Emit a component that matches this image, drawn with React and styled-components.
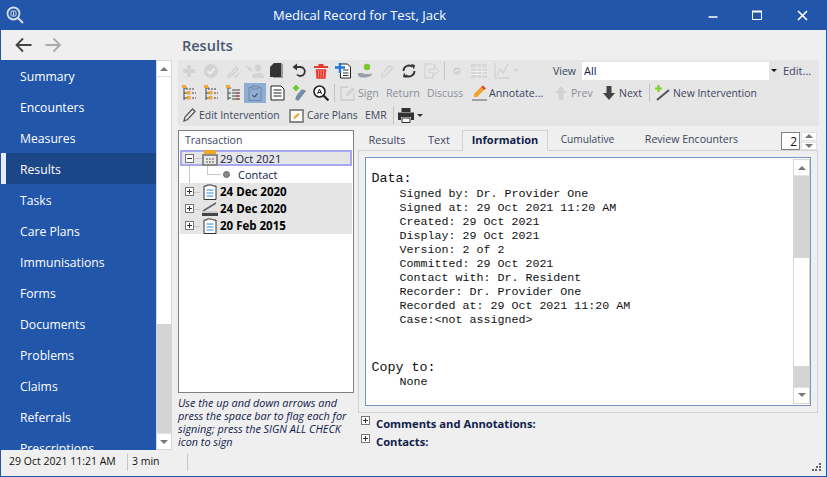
import React from 'react';
import styled, { createGlobalStyle } from 'styled-components';

const GlobalStyle = createGlobalStyle`
  html, body { margin: 0; padding: 0; background: #efefef; }
  body { font-family: 'Open Sans', 'Liberation Sans', sans-serif; font-size: 12px; color: #1e2a4a; }
`;

const BLUE = '#2156ab';

const Window = styled.div`
  width: 827px;
  height: 477px;
  box-sizing: border-box;
  border: 1px solid ${BLUE};
  border-top: 0;
  display: flex;
  flex-direction: column;
  overflow: hidden;
  background: #efefef;
`;

const TitleBar = styled.div`
  height: 30px;
  flex: none;
  background: ${BLUE};
  color: #fff;
  display: grid;
  grid-template-columns: 40px 1fr 137px;
  align-items: center;
  margin: 0 -1px;
`;

const AppLogo = styled.div`
  padding-left: 6px;
  display: flex;
`;

const TitleText = styled.div`
  text-align: center;
  font-size: 13px;
  padding-right: 11px;
`;

const WindowButtons = styled.div`
  display: flex;
  justify-content: flex-end;
  padding-right: 2px;
`;

const WindowButton = styled.div`
  width: 45px;
  height: 30px;
  display: flex;
  align-items: center;
  justify-content: center;
`;

const NavRow = styled.div`
  height: 30px;
  flex: none;
  display: flex;
  align-items: center;
  background: #efefef;
`;

const NavArrows = styled.div`
  width: 181px;
  padding-left: 14px;
  box-sizing: border-box;
  display: flex;
  gap: 13px;
  flex: none;
`;

const PageTitle = styled.div`
  font-size: 14.5px;
  font-weight: 600;
  color: #4a5670;
`;

const Body = styled.div`
  flex: 1;
  min-height: 0;
  display: flex;
`;

const Sidebar = styled.nav`
  width: 155px;
  flex: none;
  background: ${BLUE};
  overflow: hidden;
`;

const NavItem = styled.div`
  height: 31px;
  line-height: 34px;
  box-sizing: border-box;
  padding-left: ${p => (p.$active ? '14px' : '19px')};
  color: #fff;
  font-size: 12.2px;
  background: ${p => (p.$active ? '#1b4688' : 'transparent')};
  border-left: ${p => (p.$active ? '5px solid #e8edf5' : '0')};
`;

const VScroll = styled.div`
  width: ${p => p.$w || 16}px;
  flex: none;
  display: flex;
  flex-direction: column;
  box-sizing: border-box;
  border: 1px solid #d6d6d6;
  background: #fff;
`;

const ScrollBtn = styled.div`
  height: ${p => p.$h || 16}px;
  flex: none;
  background: #fff;
  display: flex;
  align-items: center;
  justify-content: center;
  border-${p => (p.$down ? 'top' : 'bottom')}: 1px solid #e2e2e2;
  box-sizing: border-box;
  &::after {
    content: '';
    border-left: 4px solid transparent;
    border-right: 4px solid transparent;
    ${p => (p.$down ? 'border-top' : 'border-bottom')}: 4px solid #777;
  }
`;

const ScrollSpace = styled.div`
  flex: ${p => p.$grow};
  background: ${p => (p.$thumb ? '#d4d4d4' : '#fff')};
`;

const Main = styled.div`
  flex: 1;
  min-width: 0;
  padding-left: 6px;
  padding-right: 7px;
  display: flex;
  flex-direction: column;
`;

const Toolbar = styled.div`
  height: 66px;
  flex: none;
  background: #e6e6e6;
  display: flex;
  flex-direction: column;
`;

const ToolRow = styled.div`
  height: ${p => p.$h}px;
  flex: none;
  display: flex;
  align-items: center;
`;

const Tool = styled.div`
  width: ${p => p.$w || 22}px;
  height: 20px;
  flex: none;
  display: flex;
  align-items: center;
  justify-content: center;
  background: ${p => (p.$on ? '#8fadd3' : 'transparent')};
`;

const ToolText = styled.div`
  height: 20px;
  flex: none;
  width: ${p => p.$w}px;
  display: flex;
  align-items: center;
  gap: ${p => p.$gap || 0}px;
  padding-left: ${p => p.$pl || 0}px;
  box-sizing: border-box;
  white-space: nowrap;
  font-size: ${p => p.$fs || 11}px;
  color: ${p => (p.$off ? '#8b8f9b' : '#3c4560')};
`;

const ToolSep = styled.div`
  width: 1px;
  height: 18px;
  flex: none;
  background: #c2c2c2;
  margin: 0 ${p => p.$r || 0}px 0 ${p => p.$l || 0}px;
`;

const ViewLabel = styled.div`
  width: 29px;
  margin-left: ${p => p.$ml}px;
  flex: none;
  font-size: 10.5px;
  color: #3c4560;
`;

const ViewSelect = styled.div`
  width: 197px;
  height: 18px;
  flex: none;
  background: #fff;
  display: flex;
  align-items: center;
  justify-content: space-between;
  padding-left: 2px;
  box-sizing: border-box;
  font-size: 11px;
  color: #10204a;
`;

const SelectArrow = styled.div`
  width: 10px;
  height: 18px;
  background: #e4e4e4;
  display: flex;
  align-items: center;
  justify-content: center;
  &::after {
    content: '';
    border-left: 3px solid transparent;
    border-right: 3px solid transparent;
    border-top: 3px solid #111;
  }
`;

const Content = styled.div`
  flex: 1;
  min-height: 0;
  display: flex;
  padding-top: 4px;
  gap: 4px;
`;

const LeftCol = styled.div`
  width: 176px;
  flex: none;
  display: flex;
  flex-direction: column;
`;

const TreeBox = styled.div`
  height: 263px;
  flex: none;
  box-sizing: border-box;
  border: 1px solid #808080;
  background: #fff;
  position: relative;
`;

const TreeHead = styled.div`
  height: 19px;
  line-height: 19px;
  padding-left: 6px;
  font-size: 10.5px;
  color: #3c4560;
`;

const TreeLine = styled.div`
  position: absolute;
  left: 10px;
  top: 34px;
  width: 1px;
  height: 60px;
  background: #c8c8c8;
`;

const TreeRow = styled.div`
  height: ${p => p.$h || 17}px;
  display: flex;
  align-items: center;
  margin: 0 1px;
  box-sizing: border-box;
  position: relative;
  background: ${p => (p.$shade || p.$sel ? '#e5e5e5' : 'transparent')};
  border: ${p => (p.$sel ? '2px solid #a8a8f0' : '0')};
  padding-left: ${p => (p.$sel ? '3px' : '5px')};
  font-size: ${p => (p.$bold ? 11.5 : 11)}px;
  font-weight: ${p => (p.$bold ? 700 : 400)};
  color: ${p => (p.$bold ? '#000' : '#10204a')};
  &::before {
    content: '';
    position: absolute;
    left: 13px;
    top: 50%;
    width: 7px;
    height: 1px;
    background: #c8c8c8;
  }
`;

const Expander = styled.div`
  width: 9px;
  height: 9px;
  flex: none;
  box-sizing: border-box;
  border: 1px solid #777;
  background: #fff;
  position: relative;
  z-index: 1;
  margin-right: 7px;
  &::before {
    content: '';
    position: absolute;
    left: 1px;
    right: 1px;
    top: 3px;
    height: 1px;
    background: #333;
  }
  ${p => p.$plus && `&::after {
    content: '';
    position: absolute;
    top: 1px;
    bottom: 1px;
    left: 3px;
    width: 1px;
    background: #333;
  }`}
`;

const TreeIcon = styled.div`
  width: 17px;
  flex: none;
  margin-right: 2px;
  display: flex;
  justify-content: center;
`;

const ChildRow = styled(TreeRow)`
  padding-left: 43px;
  gap: 8px;
  &::before {
    left: 27px;
    top: 0;
    width: 13px;
    height: 8px;
    background: transparent;
    border-left: 1px solid #c8c8c8;
    border-bottom: 1px solid #c8c8c8;
  }
`;

const Dot = styled.span`
  width: 7px;
  height: 7px;
  border-radius: 50%;
  background: #8a8a8a;
  border: 1px solid #666;
  box-sizing: border-box;
`;

const Hint = styled.div`
  font-size: 10.85px;
  font-style: italic;
  line-height: 13px;
  color: #10204a;
  padding-top: 3px;
`;

const RightCol = styled.div`
  flex: 1;
  min-width: 0;
  display: flex;
  flex-direction: column;
`;

const TabStrip = styled.div`
  height: 20px;
  flex: none;
  display: flex;
  position: relative;
  z-index: 1;
`;

const Tab = styled.div`
  height: ${p => (p.$active ? '21px' : '20px')};
  width: ${p => p.$w}px;
  flex: none;
  box-sizing: border-box;
  display: flex;
  align-items: center;
  justify-content: center;
  padding-bottom: ${p => (p.$active ? 3 : 2)}px;
  font-size: ${p => p.$fs || 11}px;
  background: ${p => (p.$active ? '#efefef' : 'transparent')};
  border: ${p => (p.$active ? '1px solid #d2d2d2' : '0')};
  border-bottom: 0;
  font-weight: ${p => (p.$active ? 700 : 400)};
  color: ${p => (p.$active ? '#10204a' : '#3c4560')};
`;

const Spinner = styled.div`
  margin-left: auto;
  margin-right: 2px;
  margin-top: 2px;
  display: flex;
  gap: 1px;
  height: 18px;
`;

const SpinnerValue = styled.div`
  width: 19px;
  box-sizing: border-box;
  border: 1px solid #808080;
  background: #fff;
  font-size: 12px;
  color: #111;
  text-align: right;
  line-height: 17px;
  padding-right: 2px;
`;

const SpinnerBtns = styled.div`
  width: 16px;
  display: flex;
  flex-direction: column;
  gap: 1px;
`;

const SpinnerBtn = styled(ScrollBtn)`
  border: 1px solid #e2e2e2;
`;

const TabPanel = styled.div`
  height: 263px;
  flex: none;
  width: 460px;
  box-sizing: border-box;
  border: 1px solid #d2d2d2;
  padding: 6px;
`;

const TextFrame = styled.div`
  height: 100%;
  box-sizing: border-box;
  border: 1px solid #7793c4;
  background: #fff;
  display: flex;
  padding: 1px 0 1px 1px;
`;

const Record = styled.pre`
  flex: 1;
  margin: 0;
  padding: 12px 0 0 4.5px;
  overflow: hidden;
  font-family: 'Liberation Mono', 'Courier New', monospace;
  font-size: 11.67px;
  line-height: 14px;
  color: #111;
`;

const RecordHead = styled.div`
  font-size: 13.33px;
  line-height: 15px;
  margin-bottom: ${p => p.$mb || 0}px;
  margin-top: ${p => p.$mt || 0}px;
`;

const Sections = styled.div`
  padding: 1px 0 0 3px;
`;

const Section = styled.div`
  height: 18px;
  display: flex;
  align-items: center;
  box-sizing: border-box;
  font-size: 11.2px;
  font-weight: 700;
  color: #10204a;
`;

const SectionToggle = styled(Expander)`
  align-self: flex-start;
  margin-top: 2px;
  margin-right: 6px;
`;

const StatusBar = styled.div`
  height: 26px;
  flex: none;
  display: flex;
  align-items: flex-start;
  padding-top: 4px;
  box-sizing: border-box;
  position: relative;
  background: #efefef;
  font-size: 10.5px;
  color: #111;
`;

const StatusCell = styled.div`
  width: ${p => p.$w}px;
  height: 17px;
  line-height: 15px;
  box-sizing: border-box;
  padding-left: ${p => p.$pl}px;
  border-right: 1px solid #c6c6c6;
  flex: none;
`;

const Grip = styled.svg`
  position: absolute;
  right: 5px;
  bottom: 5px;
`;

const Svg = ({ w = 16, h = 16, children }) => (
  <svg width={w} height={h} viewBox={`0 0 ${w} ${h}`} fill="none">{children}</svg>
);

const Logo = () => (
  <Svg w={18} h={18}>
    <circle cx="7.5" cy="7.5" r="6" stroke="#d8dde6" strokeWidth="1.8" />
    <rect x="5" y="5" width="5" height="5" rx="1" stroke="#d8dde6" />
    <path d="M7.5 5.5v4" stroke="#d8dde6" />
    <path d="M12 12l5 5" stroke="#d8dde6" strokeWidth="2" />
  </Svg>
);

const ArrowLeft = ({ color }) => (
  <Svg w={17} h={16}><path d="M16.5 8H1.500M8 1.500L1.500 8 8 14.500" stroke={color} strokeWidth="1.8" /></Svg>
);
const ArrowRight = ({ color }) => (
  <Svg w={17} h={16}><path d="M0.5 8H15M8.5 1.5L15 8l-6.5 6.5" stroke={color} strokeWidth="1.8" /></Svg>
);

const OFF = '#d3d3d3';

const IconPlus = () => <Svg><path d="M8 2v12M2 8h12" stroke={OFF} strokeWidth="4" /></Svg>;
const IconCheck = () => (
  <Svg><circle cx="8" cy="8" r="7" fill={OFF} /><path d="M4.5 8l2.5 2.5 4.5-5" stroke="#eee" strokeWidth="2" /></Svg>
);
const IconSignOff = () => (
  <Svg><path d="M3 13L11 4l2 2-8 8H3z" stroke={OFF} strokeWidth="1.5" /><path d="M9 13l2 1 3-4" stroke={OFF} strokeWidth="1.6" /></Svg>
);
const IconPerson = () => (
  <Svg w={18} h={16}>
    <circle cx="12" cy="5" r="3.4" fill={OFF} /><path d="M6 15c0-4 2-5 6-5s6 1 6 5z" fill={OFF} />
    <path d="M1 3l3 4h3M4 4v3" stroke={OFF} strokeWidth="1.4" />
  </Svg>
);
const IconDocs = () => (
  <Svg w={14} h={16}>
    <path d="M4 0h8v1h1v14H3V3z" fill="#9a9a9a" />
    <path d="M4 0h7v14H0V4z" fill="#333" />
  </Svg>
);
const IconUndo = () => (
  <Svg><path d="M5 4h4.500a4.500 4.500 0 1 1-3.500 7.500" stroke="#333" strokeWidth="1.8" /><path d="M6 .5L1.500 4 6 7.500z" fill="#333" /></Svg>
);
const IconTrash = () => (
  <Svg w={14} h={16}>
    <path d="M0 3h14v2H0zM4.500 1h5v2h-5z" fill="#e8382d" />
    <path d="M1.500 6h11l-.7 10H2.200zM4.500 7v7.500M7 7v7.500M9.500 7v7.500" fill="#e8382d" stroke="#fff" strokeWidth=".4" />
  </Svg>
);
const IconDocBlue = () => (
  <Svg w={17} h={16}>
    <path d="M5.500 1h7l3 3v11h-10z" fill="#fff" stroke="#222" />
    <path d="M8 7h5.500M8 10h5.500M8 12.500h5.500" stroke="#333" />
    <path d="M5 0v10M0 4.500h10" stroke="#1a78d8" strokeWidth="2.400" />
  </Svg>
);
const IconHand = () => (
  <Svg w={17} h={16}>
    <circle cx="10" cy="4" r="3.200" fill="#7cc92c" />
    <path d="M1 10h4l3 1h5l2-1-1 3-5 1.500H4L1 13z" fill="#9aa0a8" />
  </Svg>
);
const IconPencilOff = () => (
  <Svg><path d="M3 13.500v-3L11 2.500 13.500 5l-8 8.500z" stroke={OFF} strokeWidth="1.500" /></Svg>
);
const IconSync = () => (
  <Svg>
    <path d="M2.500 8a5.500 5.500 0 0 1 9-4.200M13.500 8a5.500 5.500 0 0 1-9 4.200" stroke="#333" strokeWidth="1.800" />
    <path d="M10 1l4 1-1 4.500zM6 15l-4-1 1-4.500z" fill="#333" />
  </Svg>
);
const IconExit = () => (
  <Svg w={17} h={16}>
    <path d="M9 1H2v14h8v-4M10 1l2 2v2" stroke={OFF} strokeWidth="1.400" />
    <path d="M6 6.500h5V4l5 4-5 4V9.500H6z" fill="#e6e6e6" stroke={OFF} />
  </Svg>
);
const IconSmallDot = () => (
  <Svg w={10} h={10}><circle cx="5" cy="5" r="3.800" fill={OFF} /><path d="M3 6l2-2 2 1" stroke="#eee" /></Svg>
);
const IconTable = () => (
  <Svg w={16} h={14}>
    <path d="M0 0h16v14H0z" fill="#d6d6d6" />
    <path d="M0 4h16M0 7.500h16M0 10.500h16M6 1v13M11 1v13" stroke="#efefef" />
  </Svg>
);
const IconChart = () => (
  <Svg>
    <path d="M1 0v15h15" stroke={OFF} strokeWidth="1.400" />
    <path d="M3 12l3-6 3 4 5-9" stroke={OFF} strokeWidth="1.400" />
  </Svg>
);
const Caret = ({ color = OFF, ml = 3 }) => (
  <svg width="6" height="3" viewBox="0 0 6 3" style={{ marginLeft: ml }}><path d="M0 0h6L3 3z" fill={color} /></svg>
);
const IconFlagTree = ({ variant }) => (
  <Svg w={16} h={16}>
    <path d="M3 3v12" stroke="#444" />
    <path d="M3 8h3M3 13h3M3 3h3" stroke="#444" />
    <rect x="1" y="0" width="4" height="3" fill="#f0a830" />
    {variant !== 3 && <rect x="6" y="6" width="3.500" height="3.500" fill="#f0a830" />}
    {variant !== 3 && <rect x="6" y="11" width="3.500" height="3.500" fill="#f0a830" />}
    {variant === 3 && <path d="M7 5h8M7 8h8M7 11h8M7 14h8" stroke="#444" />}
    {variant === 3 && <path d="M11 8h3M11 11h3M11 14h3" stroke="#b33" />}
    {variant !== 3 && <path d="M5 4h9M11 8h4M11 13h4" stroke="#444" strokeDasharray="2 1" />}
  </Svg>
);
const IconClipboard = () => (
  <Svg w={14} h={16}>
    <path d="M1 2.500h12v13H1z" stroke="#7387a6" />
    <path d="M4 1h6v3H4z" fill="#8fadd3" stroke="#7387a6" />
    <path d="M4.500 10l2 2 3-3.500" stroke="#223" />
  </Svg>
);
const IconNote = () => (
  <Svg w={15} h={16}>
    <path d="M1 1h10l3 3v11H1z" fill="#fff" stroke="#222" />
    <path d="M3.500 5h8M3.500 8h8M3.500 11h8" stroke="#222" />
  </Svg>
);
const IconVial = () => (
  <Svg w={17} h={17}>
    <path d="M2 3h6M5 0v6" stroke="#6cc72a" strokeWidth="2.400" />
    <path d="M14 6l-7 9-2-1 1-3 5-6z" fill="#5b96cf" stroke="#7f8791" strokeWidth="1.400" />
  </Svg>
);
const IconSearchA = () => (
  <Svg w={16} h={16}>
    <circle cx="6.500" cy="6.500" r="5.500" fill="#fff" stroke="#222" strokeWidth="1.600" />
    <path d="M4.500 9l2-5 2 5M5 7.500h3" stroke="#222" />
    <path d="M10.500 10.500l5 5" stroke="#222" strokeWidth="2.200" />
  </Svg>
);
const IconSignDoc = () => (
  <Svg w={17} h={16}>
    <path d="M14 8v7H1V2h7" stroke={OFF} strokeWidth="1.800" />
    <path d="M6 11V8.500L12.500 2 15 4.500 8.500 11z" fill={OFF} />
  </Svg>
);
const IconAnnotate = () => (
  <Svg w={15} h={16}>
    <path d="M2 12V9l7-7 3 3-7 7z" fill="#f2a324" />
    <path d="M9 2l2-1.500 3 3L12 5z" fill="#e8402f" />
    <path d="M0 15h15" stroke="#8a8a8a" strokeWidth="1.500" />
  </Svg>
);
const IconUp = ({ color }) => <Svg w={12} h={14}><path d="M6 0l6 7H8.500v7h-5V7H0z" fill={color} /></Svg>;
const IconDown = ({ color }) => <Svg w={12} h={14}><path d="M6 14L0 7h3.500V0h5v7H12z" fill={color} /></Svg>;
const IconNewInt = () => (
  <Svg>
    <path d="M0 3.500h7M3.500 0v7" stroke="#7ed321" strokeWidth="2.200" />
    <path d="M2 15L14 5" stroke="#555" strokeWidth="2" />
  </Svg>
);
const IconPencil = () => (
  <Svg w={13} h={14}>
    <path d="M1 13l1-4 7.500-8L12 3.500 4.500 11.500z" fill="#eee" stroke="#555" strokeWidth="1.300" />
  </Svg>
);
const IconCarePlan = () => (
  <Svg w={15} h={15}>
    <path d="M1 2h13v12H1z" fill="#fafafa" stroke="#666" strokeWidth="1.400" />
    <path d="M4 11l1-2 4-4 1.500 1.500-4 4z" fill="#f2a324" />
  </Svg>
);
const IconPrinter = () => (
  <Svg w={16} h={15}>
    <path d="M3.500 0h9v4h-9z" fill="#333" />
    <path d="M0 4.500h16V12h-3V9H3v3H0z" fill="#333" />
    <path d="M4 10h8v4.500H4z" fill="#fff" stroke="#333" />
  </Svg>
);

const IconCalendar = () => (
  <Svg w={16} h={16}>
    <rect x="2" y="0" width="12" height="4" fill="#f5a623" />
    <rect x="1" y="5" width="14" height="10" fill="#e8e8e8" stroke="#8a8a8a" strokeWidth="2" />
    <path d="M4 9h2M7 9h2M10 9h2M4 12h2M7 12h2M10 12h2" stroke="#888" strokeWidth="1.500" />
  </Svg>
);
const IconTreeDoc = () => (
  <Svg w={14} h={16}>
    <path d="M1 2h3V1h5l1 1h3v13.500H1z" fill="#fff" stroke="#333" />
    <path d="M3.500 6h7M3.500 9h7M3.500 12h7" stroke="#2a8ae0" />
  </Svg>
);
const IconScanner = () => (
  <Svg w={16} h={16}>
    <path d="M1 10l13-8" stroke="#666" strokeWidth="1.500" />
    <path d="M0 10h16v2H0z" fill="#ccc" />
    <path d="M0 12h16v3H0z" fill="#444" />
  </Svg>
);

const navItems = ['Summary', 'Encounters', 'Measures', 'Results', 'Tasks', 'Care Plans', 'Immunisations', 'Forms', 'Documents', 'Problems', 'Claims', 'Referrals', 'Prescriptions'];

const recordLines = `    Signed by: Dr. Provider One
    Signed at: 29 Oct 2021 11:20 AM
    Created: 29 Oct 2021
    Display: 29 Oct 2021
    Version: 2 of 2
    Committed: 29 Oct 2021
    Contact with: Dr. Resident
    Recorder: Dr. Provider One
    Recorded at: 29 Oct 2021 11:20 AM
    Case:<not assigned>`;

const App = () => (
  <>
    <GlobalStyle />
    <Window>
      <TitleBar>
        <AppLogo><Logo /></AppLogo>
        <TitleText>Medical Record for Test, Jack</TitleText>
        <WindowButtons>
          <WindowButton><Svg w={10} h={10}><path d="M.5 7h9" stroke="#fff" strokeWidth="1.500" /></Svg></WindowButton>
          <WindowButton><Svg w={11} h={11}><path d="M.5 1.500h9v8h-9z" stroke="#fff" /><path d="M0 1.500h10" stroke="#fff" strokeWidth="2" /></Svg></WindowButton>
          <WindowButton><Svg w={11} h={11}><path d="M1 1l9 9M10 1l-9 9" stroke="#fff" strokeWidth="1.700" /></Svg></WindowButton>
        </WindowButtons>
      </TitleBar>
      <NavRow>
        <NavArrows>
          <ArrowLeft color="#444" />
          <ArrowRight color="#aaa" />
        </NavArrows>
        <PageTitle>Results</PageTitle>
      </NavRow>
      <Body>
        <Sidebar>
          {navItems.map(n => <NavItem key={n} $active={n === 'Results'}>{n}</NavItem>)}
        </Sidebar>
        <VScroll>
          <ScrollBtn />
          <ScrollSpace $grow={248} />
          <ScrollSpace $grow={109} $thumb />
          <ScrollBtn $down />
        </VScroll>
        <Main>
          <Toolbar>
            <ToolRow $h={21}>
              <Tool><IconPlus /></Tool>
              <Tool><IconCheck /></Tool>
              <Tool><IconSignOff /></Tool>
              <Tool><IconPerson /></Tool>
              <Tool><IconDocs /></Tool>
              <Tool><IconUndo /></Tool>
              <Tool><IconTrash /></Tool>
              <Tool><IconDocBlue /></Tool>
              <Tool><IconHand /></Tool>
              <Tool><IconPencilOff /></Tool>
              <Tool><IconSync /></Tool>
              <Tool><IconExit /></Tool>
              <ToolSep $l={2} $r={1} />
              <Tool><IconSmallDot /></Tool>
              <Tool><IconTable /></Tool>
              <Tool $w={32}><IconChart /><Caret /></Tool>
              <ViewLabel $ml={31}>View</ViewLabel>
              <ViewSelect>All<SelectArrow /></ViewSelect>
              <ToolText $w={36} $pl={4}>Edit...</ToolText>
            </ToolRow>
            <ToolRow $h={24}>
              <Tool><IconFlagTree /></Tool>
              <Tool><IconFlagTree /></Tool>
              <Tool><IconFlagTree variant={3} /></Tool>
              <Tool $on><IconClipboard /></Tool>
              <Tool><IconNote /></Tool>
              <Tool><IconVial /></Tool>
              <Tool><IconSearchA /></Tool>
              <ToolSep $l={2} $r={5} />
              <ToolText $w={46} $gap={1} $fs={10.7} $off><IconSignDoc /><span>Sign</span></ToolText>
              <ToolText $w={41} $fs={10.7} $off>Return</ToolText>
              <ToolText $w={45} $fs={10.3} $off>Discuss</ToolText>
              <ToolText $w={83} $gap={2} $fs={10.7}><IconAnnotate /><span>Annotate...</span></ToolText>
              <ToolText $w={48} $gap={4} $fs={10.5} $off><IconUp color={OFF} /><span>Prev</span></ToolText>
              <ToolText $w={46} $gap={4} $fs={10.5}><IconDown color="#444" /><span>Next</span></ToolText>
              <ToolSep $r={5} />
              <ToolText $w={114} $gap={2} $fs={10.4}><IconNewInt /><span>New Intervention</span></ToolText>
            </ToolRow>
            <ToolRow $h={20}>
              <ToolText $w={111} $pl={5} $gap={3} $fs={10.4}><IconPencil /><span>Edit Intervention</span></ToolText>
              <ToolText $w={76} $gap={3} $fs={10.3}><IconCarePlan /><span>Care Plans</span></ToolText>
              <ToolText $w={28} $fs={10.5}>EMR</ToolText>
              <ToolSep $r={4} />
              <Tool $w={25}><IconPrinter /><Caret color="#333" /></Tool>
            </ToolRow>
          </Toolbar>
          <Content>
            <LeftCol>
              <TreeBox>
                <TreeLine />
                <TreeHead>Transaction</TreeHead>
                <TreeRow $sel $h={16}><Expander /><TreeIcon><IconCalendar /></TreeIcon>29 Oct 2021</TreeRow>
                <ChildRow $h={17}><Dot />Contact</ChildRow>
                <TreeRow $shade $bold><Expander $plus /><TreeIcon><IconTreeDoc /></TreeIcon>24 Dec 2020</TreeRow>
                <TreeRow $shade $bold><Expander $plus /><TreeIcon><IconScanner /></TreeIcon>24 Dec 2020</TreeRow>
                <TreeRow $shade $bold><Expander $plus /><TreeIcon><IconTreeDoc /></TreeIcon>20 Feb 2015</TreeRow>
              </TreeBox>
              <Hint>Use the up and down arrows and press the space bar to flag each for signing; press the SIGN ALL CHECK icon to sign</Hint>
            </LeftCol>
            <RightCol>
              <TabStrip>
                <Tab $w={58}>Results</Tab>
                <Tab $w={46}>Text</Tab>
                <Tab $w={86} $active>Information</Tab>
                <Tab $w={79} $fs={10.2}>Cumulative</Tab>
                <Tab $w={129} $fs={10.6}>Review Encounters</Tab>
                <Spinner>
                  <SpinnerValue>2</SpinnerValue>
                  <SpinnerBtns>
                    <SpinnerBtn $h={8.5} />
                    <SpinnerBtn $down $h={8.5} />
                  </SpinnerBtns>
                </Spinner>
              </TabStrip>
              <TabPanel>
                <TextFrame>
                  <Record>
                    <RecordHead $mb={1}>Data:</RecordHead>
                    {recordLines}
                    <RecordHead $mt={33}>Copy to:</RecordHead>
                    {'    None'}
                  </Record>
                  <VScroll $w={17}>
                    <ScrollBtn />
                    <ScrollSpace $grow={83} $thumb />
                    <ScrollSpace $grow={109} />
                    <ScrollSpace $grow={21} $thumb />
                    <ScrollBtn $down />
                  </VScroll>
                </TextFrame>
              </TabPanel>
              <Sections>
                <Section><SectionToggle $plus />Comments and Annotations:</Section>
                <Section><SectionToggle $plus />Contacts:</Section>
              </Sections>
            </RightCol>
          </Content>
        </Main>
      </Body>
      <StatusBar>
        <StatusCell $w={127} $pl={8}>29 Oct 2021 11:21 AM</StatusCell>
        <StatusCell $w={60} $pl={4}>3 min</StatusCell>
        <Grip width="9" height="8" viewBox="0 0 9 8">
          <path d="M7 0h2v2H7zM4 3h2v2H4zM7 3h2v2H7zM0 6h2v2H0zM3 6h2v2H3zM7 6h2v2H7z" fill="#666" />
        </Grip>
      </StatusBar>
    </Window>
  </>
);

export default App;
